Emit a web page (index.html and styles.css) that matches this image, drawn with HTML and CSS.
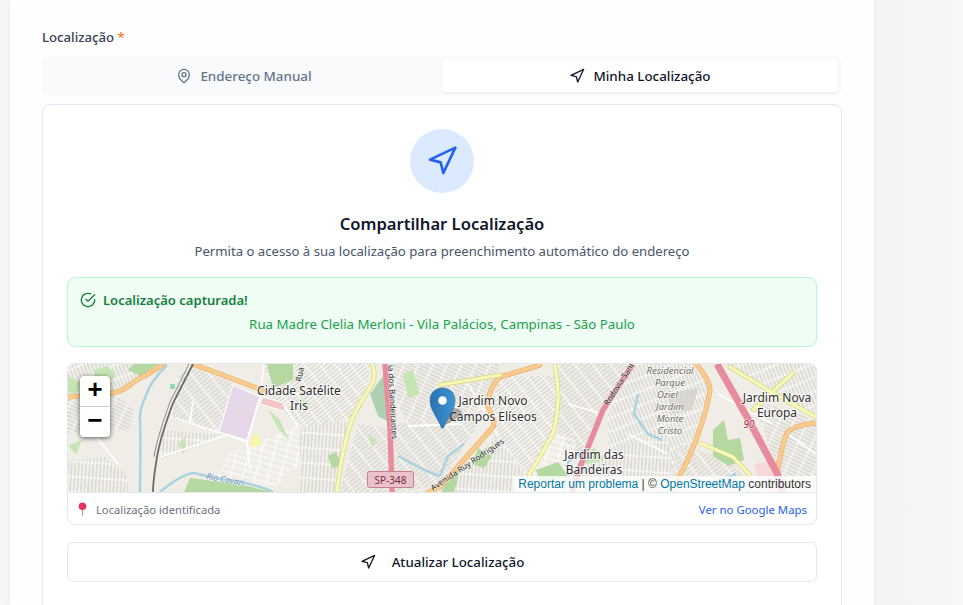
FILE: index.html
```html
<!DOCTYPE html>
<html lang="pt-BR">
<head>
<meta charset="utf-8">
<title>Localização</title>
<link rel="stylesheet" href="styles.css">
</head>
<body>
<main class="panel">
  <div class="field-label">Localização <span class="req">*</span></div>
  <div class="tabs">
    <button class="tab">
      <svg class="ico" viewBox="0 0 24 24"><path d="M20 10c0 6-8 12-8 12s-8-6-8-12a8 8 0 0 1 16 0Z"/><circle cx="12" cy="10" r="3"/></svg>
      Endereço Manual
    </button>
    <button class="tab tab-active">
      <svg class="ico" viewBox="0 0 24 24"><polygon points="3 11 22 2 13 21 11 13 3 11"/></svg>
      Minha Localização
    </button>
  </div>
  <section class="card">
    <div class="nav-circle">
      <svg class="ico ico-lg" viewBox="0 0 24 24"><polygon points="3 11 22 2 13 21 11 13 3 11"/></svg>
    </div>
    <h2 class="title">Compartilhar Localização</h2>
    <p class="lead">Permita o acesso à sua localização para preenchimento automático do endereço</p>
    <div class="alert">
      <div class="alert-head">
        <svg class="ico" viewBox="0 0 24 24"><path d="M22 11.08V12a10 10 0 1 1-5.93-9.14"/><path d="m9 11 3 3L22 4"/></svg>
        Localização capturada!
      </div>
      <div class="alert-addr">Rua Madre Clelia Merloni - Vila Palácios, Campinas - São Paulo</div>
    </div>
    <div class="map-box">
      <div class="map">
        <svg class="map-svg" viewBox="0 0 748 128" width="748" height="128">
          <defs>
            <pattern id="sa" width="3.600" height="13" patternUnits="userSpaceOnUse" patternTransform="rotate(-22)"><rect class="blk" width="3.600" height="13"/><path d="M1.800 0V13M0 6H3.600" class="st"/></pattern>
            <pattern id="sb" width="13" height="3.600" patternUnits="userSpaceOnUse" patternTransform="rotate(25)"><rect class="blk" width="13" height="3.600"/><path d="M0 1.800H13M6 0V3.600" class="st"/></pattern>
            <pattern id="sc" width="3.600" height="15" patternUnits="userSpaceOnUse" patternTransform="rotate(4)"><rect class="blk" width="3.600" height="15"/><path d="M1.800 0V15M0 7H3.600" class="st"/></pattern>
            <pattern id="sd" width="14" height="3.600" patternUnits="userSpaceOnUse" patternTransform="rotate(-38)"><rect class="blk" width="14" height="3.600"/><path d="M0 1.800H14M7 0V3.600" class="st"/></pattern>
            <pattern id="se" width="3.400" height="12" patternUnits="userSpaceOnUse" patternTransform="rotate(52)"><rect class="blk" width="3.400" height="12"/><path d="M1.700 0V12M0 6H3.400" class="st"/></pattern>
            <pattern id="sf" width="12" height="12" patternUnits="userSpaceOnUse" patternTransform="rotate(15)"><path d="M6 0V12M0 3H12M0 9H12" class="st"/></pattern>
            <linearGradient id="mk" x1="0" y1="0" x2="1" y2="0"><stop offset="0" stop-color="#2a73b0"/><stop offset="1" stop-color="#3d94d4"/></linearGradient>
          </defs>
          <rect class="land" width="748" height="128"/>

          <!-- residential street fabric -->
          <path fill="url(#sa)" d="M0 0H95L70 18 45 30 0 34Z"/>
          <path fill="url(#sb)" d="M0 36 45 31 66 44 62 66 30 64 0 70Z"/>
          <path fill="url(#sc)" d="M0 98 35 92 60 112 60 128H0Z"/>
          <path fill="url(#sd)" d="M110 12 125 1 165 20 150 66 104 56Z"/>
          <path fill="url(#sc)" d="M92 66 148 70 158 72 108 90 92 96Z"/>
          <path fill="url(#sf)" d="M160 90 230 62 232 100 205 125 150 112Z"/>
          <path fill="url(#se)" d="M196 0H302L296 40 280 62 240 66 205 40Z"/>
          <path fill="url(#sc)" d="M232 64 284 54 268 128H232Z"/>
          <path fill="url(#sd)" d="M272 128 290 60 320 64 322 128Z"/>
          <path fill="url(#sb)" d="M326 0H432L420 34 378 70 340 62 326 30Z"/>
          <path fill="url(#sd)" d="M326 60 420 46 370 122 326 128Z"/>
          <path fill="url(#se)" d="M432 12H488L488 64 460 108 424 70 424 40Z"/>
          <path fill="url(#sc)" d="M372 128 428 72 458 110 456 128Z"/>
          <path fill="url(#sd)" d="M490 0H564L535 46 510 100 490 72Z"/>
          <path fill="url(#sf)" d="M462 108 488 70 506 70 510 100 490 128H456Z"/>
          <path fill="url(#sa)" d="M566 0H630L642 28 628 76 600 112 540 100 540 50Z"/>
          <path fill="url(#sc)" d="M516 100 600 64 606 128H504Z"/>
          <path fill="url(#sa)" d="M655 0H748V50L706 30Z"/>
          <path fill="url(#sb)" d="M686 36 748 55 748 128H716Z"/>
          <path fill="url(#sd)" d="M612 80 662 96 690 128H600Z"/>

          <!-- areas -->
          <path class="g1" d="M0 12 14 20 8 30 0 28ZM26 6 40 2 48 12 36 22 26 20Z"/>
          <path class="g2" d="M66 0 90 0 72 12 60 6Z"/>
          <path class="g2" d="M199 0H225V16L205 24Z"/>
          <path class="g3" d="M302 30 318 8 321 58 310 52Z"/>
          <path class="g1" d="M335 10 345 6 352 30 340 34ZM300 70 308 76 304 84ZM110 80 118 72 116 90Z"/>
          <path class="g2" d="M116 128 122 114 170 120 205 128ZM410 84 424 92 416 104 404 100ZM260 92 268 88 274 102 264 104Z"/>
          <path class="g2" d="M645 66 656 56 660 76 672 74 676 96 660 102 645 92ZM380 112 392 106 386 128 374 128ZM468 106 490 98 500 112 472 120Z"/>
          <path class="g1" d="M200 45 212 56 222 78 210 64ZM232 34 242 40 238 48ZM512 92 526 84 536 96 518 100ZM0 82 14 76 8 90Z"/>
          <path class="pur" d="M165 21 192 33 179 76 151 68Z"/>
          <path class="pk" d="M195 33 219 40 216 47 192 40Z"/>
          <path class="yl" d="M184 72 190 70 194 80 182 84Z"/>
          <path class="pk2" d="M686 100 714 96 712 128H694Z"/>
          <path class="gry" d="M600 30 630 24 624 46 604 50Z"/>
          <rect class="mint" x="102" y="20" width="5" height="5"/>

          <!-- minor roads -->
          <path class="minor" d="M92 93 159 71 179 78 182 106M107 54 152 69M192 33 179 78M125 38 122 58M230 62 215 40M196 0 192 33M340 62 392 60M400 20 430 70M500 40 535 50M560 70 600 90M650 30 705 60M720 70 748 90M20 62 50 100"/>

          <!-- rivers -->
          <path class="riv" d="M99 1C88 12 82 20 79 29 74 40 71 48 72 56 73 80 72 110 72 128"/>
          <path class="riv" d="M92 128C104 118 116 110 126 109 140 112 152 116 165 116 180 120 194 122 205 128"/>
          <path class="riv" d="M330 92C345 100 362 110 372 112M372 112 380 92 396 80"/>
          <path class="riv" d="M570 30 566 50 580 70 594 76M497 128 500 98 516 86"/>
          <path class="riv" d="M649 118 668 110"/>

          <!-- roads -->
          <path class="case-o" d="M0 33 45 29C56 27 60 22 69 16 78 11 88 6 95 0M125 0 189 24 196 28"/>
          <path class="road-o" d="M0 33 45 29C56 27 60 22 69 16 78 11 88 6 95 0M125 0 189 24 196 28"/>
          <path class="case-o" d="M472 1 432 13C424 20 422 30 419 39 422 50 428 56 425 63L372 123 360 128M629 1C636 10 642 18 642 26 640 40 634 60 629 73 624 88 618 100 612 111L604 128M748 59C735 60 722 64 719 69 714 80 712 96 709 106"/>
          <path class="road-o" d="M472 1 432 13C424 20 422 30 419 39 422 50 428 56 425 63L372 123 360 128M629 1C636 10 642 18 642 26 640 40 634 60 629 73 624 88 618 100 612 111L604 128M748 59C735 60 722 64 719 69 714 80 712 96 709 106"/>
          <path class="case-y" d="M304 0C308 8 306 14 305 18 298 30 290 42 285 53 278 72 272 100 269 128M487 1C489 15 491 28 490 39 489 50 488 60 485 69 478 84 470 96 462 109L457 128M372 21 432 11M632 79 665 93 682 111M662 3 705 29 748 53M685 46 725 9"/>
          <path class="road-y" d="M304 0C308 8 306 14 305 18 298 30 290 42 285 53 278 72 272 100 269 128M487 1C489 15 491 28 490 39 489 50 488 60 485 69 478 84 470 96 462 109L457 128M372 21 432 11M632 79 665 93 682 111M662 3 705 29 748 53M685 46 725 9"/>
          <path class="rail" d="M125 0 105 39C98 58 92 75 89 93 87 105 85 116 85 128"/>
          <path class="rail-2" d="M121 0 102 38C95 58 89 75 86 93"/>
          <path class="road-p" d="M317 0 322 63 324 128"/>
          <path class="road-p" d="M565 0 535 46 512 103 504 128"/>
          <path class="road-p wide" d="M649 0 679 53 709 109 715 128"/>

          <!-- labels -->
          <text class="lb" x="231" y="31">Cidade Satélite</text>
          <text class="lb" x="231" y="46">Iris</text>
          <text class="lb" x="425" y="41">Jardim Novo</text>
          <text class="lb" x="425" y="57">Campos Elíseos</text>
          <text class="lb" x="526" y="95">Jardim das</text>
          <text class="lb" x="526" y="110">Bandeiras</text>
          <text class="lb" x="709" y="38">Jardim Nova</text>
          <text class="lb" x="709" y="53">Europa</text>
          <text class="lc" x="602" y="10">Residencial</text>
          <text class="lc" x="602" y="22">Parque</text>
          <text class="lc" x="602" y="34">Oziel -</text>
          <text class="lc" x="602" y="46">Jardim</text>
          <text class="lc" x="602" y="58">Monte</text>
          <text class="lc" x="602" y="70">Cristo</text>
          <text class="lr" transform="translate(320 1) rotate(87)" x="0" y="0">ia dos Bandeirantes</text>
          <text class="lr" transform="translate(233 18) rotate(-78)" x="0" y="0">Rua T</text>
          <text class="lr" transform="translate(540 42) rotate(-57)" x="0" y="0">Rodovia Santos</text>
          <text class="lr" transform="translate(365 127) rotate(-34)" x="0" y="0">Avenida Ruy Rodrigues</text>
          <text class="lw" transform="translate(138 115) rotate(10)" x="0" y="0">Rio Cavari</text>
          <text class="l90" x="681" y="64">90</text>
          <rect class="sp" x="299.500" y="107.500" width="46" height="16" rx="2"/>
          <text class="spt" x="322.500" y="119.500">SP-348</text>

          <!-- marker -->
          <path class="mk-shadow" d="M373 64 392 52C396 48 392 44 386 44L372 46Z"/>
          <path fill="url(#mk)" stroke="#2a6a9c" stroke-width=".6" d="M373.500 64C370 54 362 46 362 36.500 362 29 367 24 374.500 24S387 29 387 36.500C387 46 379 54 375.500 64Z"/>
          <circle class="mk-hole" cx="374.500" cy="36.500" r="4.300"/>
        </svg>
        <div class="zoom">
          <a class="zoom-btn">+</a>
          <a class="zoom-btn">−</a>
        </div>
        <div class="attrib"><a>Reportar um problema</a> | © <a>OpenStreetMap</a> contributors</div>
      </div>
      <div class="map-foot">
        <span class="foot-left">
          <svg class="pin" viewBox="0 0 10 14"><path class="pin-stem" d="M5 7V13.500"/><circle class="pin-head" cx="5" cy="4.200" r="3.800"/></svg>
          Localização identificada
        </span>
        <a class="foot-link">Ver no Google Maps</a>
      </div>
    </div>
    <button class="refresh">
      <svg class="ico" viewBox="0 0 24 24"><polygon points="3 11 22 2 13 21 11 13 3 11"/></svg>
      Atualizar Localização
    </button>
  </section>
</main>
</body>
</html>
```

FILE: styles.css
```css
* { box-sizing: border-box; }
html, body { margin: 0; height: 605px; overflow: hidden; }
body {
  background: linear-gradient(90deg, #f5f6f8 0, #f3f4f6 92%, #f6f7f9 100%);
  font-family: "Noto Sans", sans-serif;
  padding-left: 10px;
}
.panel {
  width: 864px;
  height: 605px;
  overflow: hidden;
  background: #fefeff;
  padding: 27px 32px 0;
  box-shadow: 0 0 6px rgba(15, 23, 42, .05);
}
.field-label {
  font-size: 13.200px;
  font-weight: 500;
  line-height: 20px;
  color: #374151;
  margin-bottom: 9px;
}
.req { color: #f97316; }
.ico {
  width: 16px;
  height: 16px;
  fill: none;
  stroke: currentColor;
  stroke-width: 2;
  stroke-linecap: round;
  stroke-linejoin: round;
  flex: none;
}
.tabs {
  display: grid;
  grid-template-columns: 1fr 1fr;
  height: 40px;
  padding: 4px;
  background: #f8fafc;
  border-radius: 6px;
  margin-bottom: 8px;
}
.tab {
  display: flex;
  align-items: center;
  justify-content: center;
  gap: 8px;
  border: 0;
  background: transparent;
  border-radius: 4px;
  font: 500 13.400px "Noto Sans", sans-serif;
  color: #64748b;
  padding: 0;
}
.tab-active {
  background: #fff;
  color: #0f172a;
  box-shadow: 0 1px 3px rgba(15, 23, 42, .08);
}
.card {
  display: flex;
  flex-direction: column;
  align-items: center;
  height: 540px;
  background: #fff;
  border: 1px solid #e2e8f0;
  border-radius: 8px;
  padding: 24px;
}
.nav-circle {
  width: 64px;
  height: 64px;
  border-radius: 50%;
  background: #dbeafe;
  color: #2563eb;
  display: flex;
  align-items: center;
  justify-content: center;
  margin-bottom: 17px;
}
.ico-lg { width: 32px; height: 32px; }
.title {
  margin: 0 0 3px;
  font-size: 16.600px;
  line-height: 28px;
  font-weight: 600;
  color: #0f172a;
}
.lead {
  margin: 0 0 16px;
  font-size: 13.150px;
  line-height: 20px;
  color: #475569;
}
.alert {
  width: 100%;
  height: 70px;
  background: #f0fdf4;
  border: 1px solid #bbf7d0;
  border-radius: 8px;
  padding: 12px;
  margin-bottom: 16px;
}
.alert-head {
  display: flex;
  align-items: center;
  gap: 7px;
  font-size: 13.050px;
  font-weight: 600;
  line-height: 20px;
  color: #15803d;
  margin-bottom: 4px;
}
.alert-addr {
  text-align: center;
  font-size: 13.300px;
  line-height: 20px;
  color: #16a34a;
}
.map-box {
  width: 100%;
  height: 162px;
  flex: none;
  border: 1px solid #e2e8f0;
  border-radius: 8px;
  overflow: hidden;
  margin-bottom: 17px;
  background: #fff;
}
.map {
  position: relative;
  height: 128px;
  overflow: hidden;
}
.map-svg { display: block; }
.land { fill: #f0ede7; }
.blk { fill: #dedbd3; }
.st { fill: none; stroke: #fff; stroke-width: 1.100; }
.minor { fill: none; stroke: #fff; stroke-width: 1.800; }
.g1 { fill: #c6e5b4; }
.g2 { fill: #b5d8a0; }
.g3 { fill: #acd0b0; }
.pur { fill: #e6d8e8; stroke: #fff; stroke-width: 1; }
.pk { fill: #f3c6c6; stroke: #fff; stroke-width: 1; }
.pk2 { fill: #f5d9d9; }
.yl { fill: #f8f6a8; }
.gry { fill: #d9d6d0; }
.mint { fill: #8ddcb4; }
.riv { fill: none; stroke: #aad3df; stroke-width: 2.500; }
.case-o, .case-y { fill: none; stroke-linecap: round; stroke-linejoin: round; }
.case-o { stroke: #e2ac6c; stroke-width: 5; }
.road-o { fill: none; stroke: #fbcb8d; stroke-width: 3.800; stroke-linejoin: round; stroke-linecap: round; }
.case-y { stroke: #d3d57e; stroke-width: 4.500; }
.road-y { fill: none; stroke: #f8f9b9; stroke-width: 3.200; stroke-linejoin: round; stroke-linecap: round; }
.rail { fill: none; stroke: #6a6a6a; stroke-width: 1.800; }
.rail-2 { fill: none; stroke: #8a8a8a; stroke-width: 1; }
.road-p { fill: none; stroke: #e68c9d; stroke-width: 5.500; }
.wide { stroke-width: 7; }
.lb, .lc, .lr, .lw, .l90, .spt {
  font-family: "Noto Sans", sans-serif;
  text-anchor: middle;
}
.lb {
  font-size: 12px;
  fill: #2f2f2f;
  stroke: rgba(255, 255, 255, .8);
  stroke-width: 2;
  paint-order: stroke;
}
.lc {
  font-size: 9.500px;
  font-style: italic;
  fill: #6a6a5e;
  stroke: rgba(255, 255, 255, .8);
  stroke-width: 1.500;
  paint-order: stroke;
}
.lr {
  font-size: 8px;
  fill: #222;
  text-anchor: start;
  stroke: rgba(255, 255, 255, .6);
  stroke-width: 1.200;
  paint-order: stroke;
}
.lw {
  font-size: 8.500px;
  font-style: italic;
  fill: #5a82b0;
  text-anchor: start;
  stroke: rgba(255, 255, 255, .7);
  stroke-width: 1.200;
  paint-order: stroke;
}
.l90 {
  font-size: 10px;
  font-style: italic;
  fill: #a01e3c;
  stroke: rgba(255, 255, 255, .8);
  stroke-width: 1.500;
  paint-order: stroke;
}
.sp { fill: #e9c2cb; stroke: #c7808f; stroke-width: 1; }
.spt { font-size: 10px; fill: #7a2a3f; }
.mk-shadow { fill: rgba(0, 0, 0, .28); }
.mk-hole { fill: #fff; }
.zoom {
  position: absolute;
  left: 12px;
  top: 12px;
  width: 30px;
  background: #fff;
  border-radius: 4px;
  box-shadow: 0 1px 5px rgba(0, 0, 0, .65);
  overflow: hidden;
}
.zoom-btn {
  display: block;
  height: 30px;
  text-align: center;
  font: 700 26px/30px "Liberation Mono", monospace;
  color: #000;
}
.zoom-btn + .zoom-btn {
  border-top: 1px solid #ccc;
  height: 31px;
}
.attrib {
  position: absolute;
  right: 0;
  bottom: 0;
  height: 16px;
  padding: 0 5px;
  background: rgba(255, 255, 255, .8);
  font: 12px/16px "Liberation Sans", Arial, sans-serif;
  color: #333;
  white-space: nowrap;
}
.attrib a { color: #0078a8; }
.map-foot {
  display: flex;
  align-items: center;
  justify-content: space-between;
  height: 33px;
  padding: 0 9px 0 9px;
  border-top: 1px solid #e2e8f0;
  font-size: 11.400px;
}
.foot-left {
  display: flex;
  align-items: center;
  gap: 8px;
  color: #6b7280;
  font-size: 11.200px;
}
.pin { width: 11px; height: 14px; flex: none; }
.pin-head { fill: #e8335f; }
.pin-stem { stroke: #9aa0a8; stroke-width: 1.300; fill: none; }
.foot-link { color: #2563eb; }
.refresh {
  width: 100%;
  height: 40px;
  flex: none;
  display: flex;
  align-items: center;
  justify-content: center;
  gap: 16px;
  background: #fff;
  border: 1px solid #e2e8f0;
  border-radius: 6px;
  font: 500 13.300px "Noto Sans", sans-serif;
  color: #0f172a;
}
```
